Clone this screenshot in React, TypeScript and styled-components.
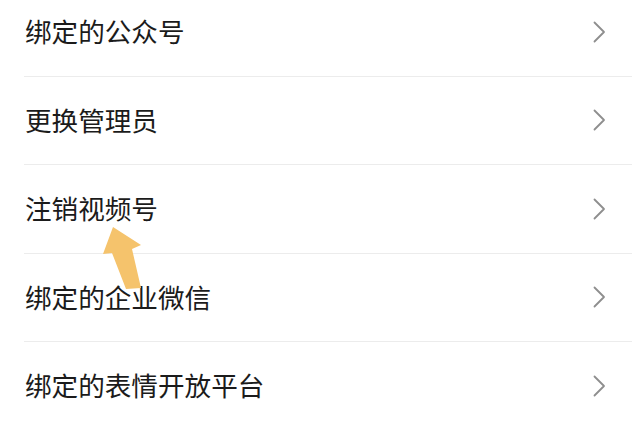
import React from "react";
import styled, { createGlobalStyle } from "styled-components";

const GlobalStyle = createGlobalStyle`
  html, body {
    margin: 0;
    padding: 0;
    background: #ffffff;
  }
  body {
    font-family: "Noto Sans CJK SC", "Noto Sans", sans-serif;
    overflow: hidden;
  }
`;

const Page = styled.div`
  position: relative;
  width: 640px;
  height: 426px;
  background: #ffffff;
  overflow: hidden;
`;

const List = styled.ul`
  list-style: none;
  margin: -12px 8px 0 24px;
  padding: 0;
`;

const Row = styled.li`
  height: 87.5px;
  display: flex;
  align-items: center;
  justify-content: space-between;
  border-bottom: 1px solid #ececec;
  padding: 0 26px 0 1px;
`;

const Label = styled.span`
  font-size: 26.6px;
  color: #1b1b1b;
  line-height: 1;
`;

const Chevron = styled.svg`
  width: 13px;
  height: 22px;
  flex-shrink: 0;
`;

const Arrow = styled.svg`
  position: absolute;
  left: 0;
  top: 0;
  width: 640px;
  height: 426px;
  pointer-events: none;
`;

const items = [
  "绑定的公众号",
  "更换管理员",
  "注销视频号",
  "绑定的企业微信",
  "绑定的表情开放平台",
];

const ChevronIcon = () => (
  <Chevron viewBox="0 0 13 22">
    <polyline
      points="1.5,1.5 11,11 1.5,20.5"
      fill="none"
      stroke="#8e8e8e"
      strokeWidth="1.8"
      strokeLinecap="round"
      strokeLinejoin="round"
    />
  </Chevron>
);

const App: React.FC = () => {
  return (
    <>
      <GlobalStyle />
      <Page>
        <List>
          {items.map((item) => (
            <Row key={item}>
              <Label>{item}</Label>
              <ChevronIcon />
            </Row>
          ))}
        </List>
        <Arrow viewBox="0 0 640 426">
          <polygon
            points="113,227 141,245 132,249 141,288 126,289 112,253 103,254"
            fill="#f5c36c"
          />
        </Arrow>
      </Page>
    </>
  );
};

export default App;
